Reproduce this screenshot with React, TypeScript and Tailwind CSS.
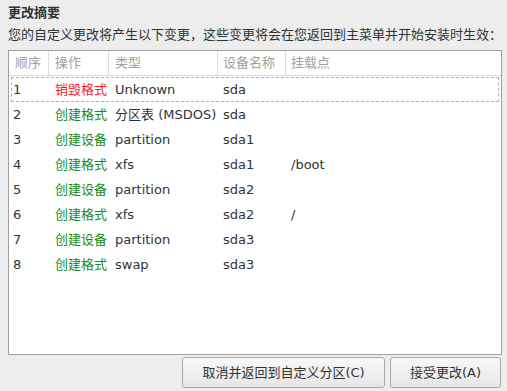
import React from "react";

const rows = [
  { n: "1", op: "销毁格式", red: true, type: "Unknown", dev: "sda", mnt: "" },
  { n: "2", op: "创建格式", type: "分区表 (MSDOS)", dev: "sda", mnt: "" },
  { n: "3", op: "创建设备", type: "partition", dev: "sda1", mnt: "" },
  { n: "4", op: "创建格式", type: "xfs", dev: "sda1", mnt: "/boot" },
  { n: "5", op: "创建设备", type: "partition", dev: "sda2", mnt: "" },
  { n: "6", op: "创建格式", type: "xfs", dev: "sda2", mnt: "/" },
  { n: "7", op: "创建设备", type: "partition", dev: "sda3", mnt: "" },
  { n: "8", op: "创建格式", type: "swap", dev: "sda3", mnt: "" },
];

const font = {
  fontFamily: '"DejaVu Sans", "Noto Sans CJK SC", sans-serif',
};
const cjk = {
  fontFamily: '"Noto Sans CJK SC", "DejaVu Sans", sans-serif',
};

export default function App() {
  return (
    <div
      className="w-[507px] h-[391px] bg-[#ededed] text-[#2e3436] text-[13px] flex flex-col overflow-hidden"
      style={font}
    >
      <div className="px-[8px] pt-[3px] font-bold h-[20px] leading-[20px] text-[#2e3436]">更改摘要</div>
      <div className="pl-[8px] mt-[4px] h-[20px] leading-[20px] whitespace-nowrap" style={cjk}>
        您的自定义更改将产生以下变更，这些变更将会在您返回到主菜单并开始安装时生效：
      </div>
      <div className="mt-[6px] ml-[8px] mr-[5px] h-[305px] border border-[#a0a0a0] bg-white flex flex-col">
        <div className="grid grid-cols-[40px_60px_109px_68px_1fr] h-[25px] border-b border-[#dcdcdc] text-[#a0a0a0] items-center">
          <div className="pl-[6px] border-r border-[#dcdcdc] h-full flex items-center">顺序</div>
          <div className="pl-[6px] border-r border-[#dcdcdc] h-full flex items-center">操作</div>
          <div className="pl-[6px] border-r border-[#dcdcdc] h-full flex items-center">类型</div>
          <div className="pl-[5px] border-r border-[#dcdcdc] h-full flex items-center">设备名称</div>
          <div className="pl-[5px] h-full flex items-center">挂载点</div>
        </div>
        <div className="flex flex-col pt-[1px]">
          {rows.map((r, i) => (
            <div
              key={r.n}
              className={
                "grid grid-cols-[39px_60px_109px_68px_1fr] h-[25px] items-center mx-[2px] " +
                (i === 0 ? "border border-dashed border-[#b0b0b0]" : "border border-transparent")
              }
            >
              <div className="pl-[1px]">{r.n}</div>
              <div className={r.red ? "pl-[4px] text-[#ff1a1a]" : "pl-[4px] text-[#1a8a1a]"}>{r.op}</div>
              <div className="pl-[4px]">{r.type}</div>
              <div className="pl-[3px]">{r.dev}</div>
              <div className="pl-[3px]">{r.mnt}</div>
            </div>
          ))}
        </div>
      </div>
      <div className="flex justify-end gap-[5px] mt-[2px] mr-[6px]">
        <button className="w-[203px] h-[31px] rounded-[3px] border border-[#a8a8a8] bg-gradient-to-b from-[#f8f8f8] to-[#e6e6e6] text-[#2e3436] text-[13px]" style={font}>
          取消并返回到自定义分区(C)
        </button>
        <button className="w-[111px] h-[31px] rounded-[3px] border border-[#a8a8a8] bg-gradient-to-b from-[#f8f8f8] to-[#e6e6e6] text-[#2e3436] text-[13px]" style={font}>
          接受更改(A)
        </button>
      </div>
    </div>
  );
}
